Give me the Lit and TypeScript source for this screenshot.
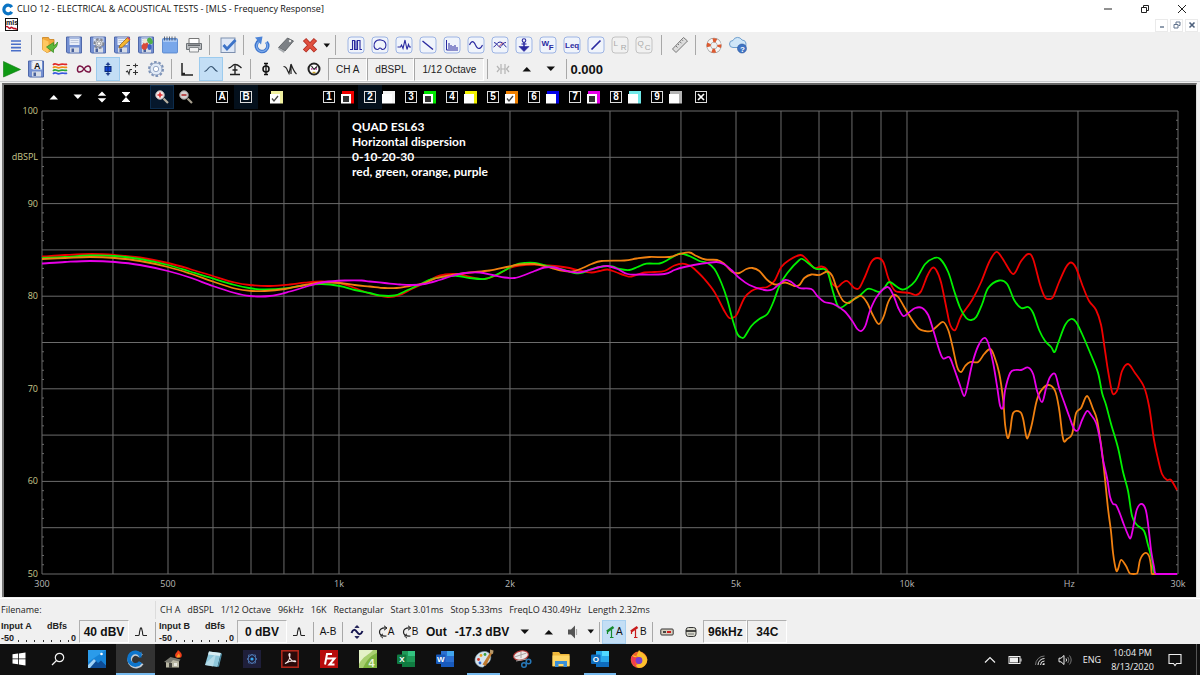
import { LitElement, html, svg, css } from "lit";
import { customElement, property } from "lit/decorators.js";
import { classMap } from "lit/directives/class-map.js";

type Pt = [number, number];

/* ---------- plot geometry (viewBox units) ---------- */
const PX = 42;
const PY = 111;
const PW = 1137;
const PH = 463;

const toPoints = (s: string): Pt[] =>
  s.trim().split(/\s+/).map((p) => p.split(",").map(Number) as Pt);

/* Catmull-Rom spline through the sampled points */
const spline = (pts: Pt[]): string => {
  let d = `M${pts[0][0]},${pts[0][1]}`;
  for (let i = 0; i < pts.length - 1; i++) {
    const a = pts[Math.max(0, i - 1)];
    const b = pts[i];
    const c = pts[i + 1];
    const e = pts[Math.min(pts.length - 1, i + 2)];
    const limY = (v: number) => Math.min(v, PY + PH).toFixed(1);
    const limX = (v: number) => Math.max(b[0], Math.min(v, c[0])).toFixed(1);
    d += `C${limX(b[0] + (c[0] - a[0]) / 6)},${limY(b[1] + (c[1] - a[1]) / 6)} ${limX(c[0] - (e[0] - b[0]) / 6)},${limY(c[1] - (e[1] - b[1]) / 6)} ${c[0]},${c[1]}`;
  }
  return d;
};

const CURVES: { color: string; data: string }[] = [
  {
    color: "#f00000",
    data: `42,256.5 65,255 92,254 115,255 140,257.5 168,263 190,269 213,276 235,282.5 250,285 270,286 290,284.5 305,282.7 322,281.5 340,283 355,288 370,293.5 388,297 400,295 412,289 425,283 437,276.5 445,274.5 455,274 463,275 475,278 485,279 495,276 510,268 520,265.5 535,264.5 548,265.5 560,266.5 570,268 580,270.5 592,272.5 600,271 608,269.5 616,272 627,276 632,276.5 645,272.5 655,272 665,271 675,265.5 683,263.7 690,265.5 695,269 705,279 715,292 725,311 730,318 735,317 738,313.5 745,298 752,291 760,288 768,287 775,281 782,267 790,260 801,255 807,259 815,268 822,266.5 828,270 832,282 838,287 843,283 848,281 855,288 860,288 866,276 872,262 878,258 884,262 889,278 895,290 900,292 910,293 917,295 922,291 928,276 933,268 937,270 942,283 948,312 951,325 956,330 962,316 973,300 982,282 990,262 997,252 1003,258 1012,272.5 1016,272.5 1022,261 1029,254 1034,259 1041,285 1046,297.5 1050,299 1054,297 1060,282 1067,267 1072,262.5 1077,268 1084,287 1090,301 1097,310 1102,325 1106,351 1109,371 1113,392 1116,393.5 1119,388 1123,371 1129,364 1136,373 1145,387 1150,406 1155,440 1159,459 1163,474 1168,480 1172,480 1178,490`,
  },
  {
    color: "#00f000",
    data: `42,258 65,257 90,255.5 115,256 140,259 168,265 190,271.5 213,278.5 235,285 252,288.5 265,289.5 285,288.5 303,285.5 322,284 340,286 355,290 370,293 380,295.5 395,295.5 408,290 420,284.5 432,279 447,276.5 458,276 470,278 485,279 495,275.5 505,270.5 515,265 525,263 535,263 550,266.5 565,270 575,273 582,273 592,269 603,266.5 613,266.5 620,269 630,270 638,267 647,263.7 660,263.5 668,260 675,256 681,253.5 690,256 700,261 708,263 715,269 722,283 728,300 733,319 738,334 742,337.5 745,337 752,326 760,319 768,314 774,302 780,286 788,273 800,260 804,259.5 810,264 817,269 825,269 829,274 833,289 838,305 842,307.5 850,302 860,296 868,289 873,289.5 880,292 885,288 890,282 898,287 903,289.5 908,288 916,281 926,264 935,258 941,259 949,272 955,291 961,308 967,318 972,320 977,317 983,304 989,288 1000,280.5 1008,284 1015,300 1022,308 1029,307 1034,313 1040,330 1046,341 1052,347 1055.5,352 1059,343 1066,325 1072,319 1077,322 1083,334 1092,355 1099,373 1103,393 1107,405 1112,424 1119,448 1124,472 1129,491 1133,516 1138,525 1145,531 1149,545 1153,560 1156,574 1178,574`,
  },
  {
    color: "#f08010",
    data: `42,259 65,258 90,257 115,258 140,261 168,267 190,273.5 213,281.5 235,288.5 252,291 265,291 285,289 305,285 322,282.5 340,283 355,285 370,286.5 385,288 397,288 410,286 425,283 437,278 452,275 470,272.5 490,270.5 507,267 520,264.5 535,264 548,267 562,270.5 573,271.5 583,268 592,264 602,261 625,260.5 637,258.5 650,257 670,257 680,254 690,252.5 697,256 706,259.5 718,260 725,264 733,272 740,273 747,269 753,268 760,271 768,280 776,284.5 786,282.5 795,286 800,285 805,278 812,274.5 820,275 828,271.5 833,276 838,290 844,301 850,303 855,299 862,296 868,303 873,314 878,323 881,323 885,315 889,302 894,295 899,297 905,307 913,320 920,329 926,331 932,331 937,327 944,322 949,330 953,345 958,367 962,372 966,366 971,362 979,362 985,354 991,349 995,356 1000,373 1004,400 1006,425 1008.5,438 1011,431 1014,413 1021,412 1024,419 1027,436 1029,437 1033,423 1037,403 1041,392 1049,385 1056,391 1060,409 1063,433 1065,441.5 1068,439 1073,434 1077,413 1082,408 1088,396 1094,409 1098,420 1102,445 1105,470 1109,509 1112,532 1114,553 1117,570 1119,569 1122,560 1127,566 1131,573.5 1138,573.5 1141,560 1146,553 1150,556 1152,566 1153,574 1178,574`,
  },
  {
    color: "#e800e8",
    data: `42,263.5 65,262 90,261 115,262 140,265 168,271 190,277.5 213,286 235,293 250,296 270,296 290,291.5 310,285.5 325,282 345,280.5 362,280.5 370,281.5 385,283 400,284.5 412,285 425,284 440,280 452,276 465,273 480,272.5 493,275 505,277.5 515,278 525,275 535,271 545,267.5 555,267.5 565,270.5 578,272.5 590,270 600,267 608,266 618,269 628,274 640,274.5 665,274 675,270 685,267 700,264 717,262 725,264.5 732,270 740,278 750,285 765,290 773,289.5 780,284 786,280 792,282 800,288 812,289 818,296 825,302 834,304 845,311 853,321 858,329 862,331 866,326 871,310 878,296 888,287 894,295 899,308 904,316 909,313 916,308 923,308 929,315 934,330 940,350 944,358.5 950,357 954,366 961,386 965,396 968,387 973,364 979,346 985,338 989,343 994,363 998,387 1001,406 1004,407 1006,390 1011,373 1016,370 1022,370 1029,367.5 1034,374 1038,391 1043,402 1047,388 1051,377 1056,374 1060,388 1065,402 1070,416 1075,429 1079,430 1083,420 1088,411 1092,415 1097,423 1101,440 1104,460 1108,478 1111,497 1114,504 1117,505 1121,514 1125,525 1130,537 1132,537 1135,523 1138,509 1143,504 1147,511 1150,532 1152,550 1155,567 1157,574 1178,574`,
  },
];

const FREQS = [300, 400, 500, 600, 700, 800, 900, 1000, 2000, 3000, 4000, 5000, 6000, 7000, 8000, 9000, 10000, 20000, 30000];
const frac = (f: number) => Math.log10(f / 300) / 2;
const X_LABELS: [number, string][] = [
  [300, "300"], [500, "500"], [1000, "1k"], [2000, "2k"], [5000, "5k"], [10000, "10k"], [19300, "Hz"], [30000, "30k"],
];
const Y_LABELS = ["100", "dBSPL", "90", "", "80", "", "70", "", "60", "", "50"];

/* ---------- icons ---------- */
const icon = (w: number, h: number, body: unknown) =>
  html`<svg width=${w} height=${h} viewBox="0 0 ${w} ${h}" fill="none" aria-hidden="true">${body}</svg>`;

const floppy = svg`
  <path d="M1.500 1h15v16h-14l-1-1z" fill="#7490d2" stroke="#4f68aa"/>
  <path d="M4.500 1.500h10V9h-10z" fill="#e9eef8"/><path d="M4.500 1.500h10v1.500h-10z" fill="#a9bae0"/>
  <path d="M5.500 4.500h8M5.500 6.500h8" stroke="#b4bfd6" stroke-width=".8"/>
  <path d="M5 11.500h9v5H5z" fill="#d7dce6"/><path d="M6.500 12.500h2.500v3.500H6.500z" fill="#48619c"/>`;

const mode = (body: unknown, off = false) => icon(18, 18, svg`
  <rect x="1" y="1" width="16" height="16" rx="3" fill=${off ? "#f1f1f1" : "#f0f4fb"} stroke=${off ? "#c2c2c2" : "#9db4e4"}/>
  <g stroke=${off ? "#b4b4b4" : "#2a2aa0"} stroke-width="1.100">${body}</g>`);

const modeText = (a: string, b: string, off = false) => mode(svg`
  <g stroke="none" fill=${off ? "#a8a8a8" : "#2a2aa0"} font-family="Liberation Sans, Arial, sans-serif" font-weight=${off ? "400" : "700"}>
    <text x="2.500" y="10" font-size="8">${a}</text><text x="9.800" y="14" font-size="8">${b}</text></g>`, off);

const gearRing = (cx: number, cy: number, r: number, fill: string, stroke: string) => svg`
  <circle cx=${cx} cy=${cy} r=${r} fill="none" stroke=${stroke} stroke-width="2" stroke-dasharray="2.600 1.800"/>
  <circle cx=${cx} cy=${cy} r=${r - 1} fill=${fill} stroke=${stroke} stroke-width=".8"/>
  <circle cx=${cx} cy=${cy} r=${r / 2.600} fill="#fff" stroke=${stroke} stroke-width=".8"/>`;

const I = {
  clio: icon(13, 13, svg`<path d="M10.800 4.200A4.300 4.300 0 1 0 10.800 8.800" stroke="#0b74c4" stroke-width="3.200"/>`),
  mls: icon(14, 14, svg`
    <rect x=".5" y=".5" width="12" height="12" fill="#fff" stroke="#111"/>
    <text x="1" y="6.500" font-size="7" font-weight="700" fill="#111" font-family="Liberation Sans, sans-serif">mls</text>
    <path d="M1 9c2-2 3 3 4.500 1s3 1.500 4 .5 1.500 2 2.500 0" stroke="#c01020" stroke-width="1.500"/>`),
  menu: icon(18, 18, svg`<path d="M4 5h10M4 8.300h10M4 11.600h10M4 14.700h10" stroke="#4a6fc8" stroke-width="1.600"/>`),
  open: icon(18, 18, svg`
    <path d="M1.500 1.500h6l1 2h4.500v10l-7 3-4.500-3z" fill="#f2a93a" stroke="#c9801c" stroke-width=".8"/>
    <path d="M1.500 3l6 2.500v11.500l-6-3z" fill="#ffc860"/>
    <path d="M16.500 6c0 4-1.500 6-4 7v3.500L5.500 11l7-4.500v3c2-.5 3-1.500 4-3.500z" fill="#5cb83c" stroke="#2f8a1e" stroke-width=".7"/>`),
  save: icon(18, 18, floppy),
  saveGear: icon(18, 18, svg`${floppy}${gearRing(10, 7.5, 4.5, "#e4e4e4", "#808590")}`),
  saveEdit: icon(18, 18, svg`${floppy}<path d="M6 12l1-3 7.500-7.500 2.500 2.300L9.300 11.300z" fill="#f6b62e" stroke="#9a6412" stroke-width=".8"/><path d="M14 2l1-1 2.500 2.300-1 1z" fill="#d8485a"/>`),
  saveColor: icon(18, 18, svg`${floppy}<ellipse cx="8" cy="10" rx="3" ry="4" fill="#d94a3a" transform="rotate(30 8 10)"/><ellipse cx="13" cy="5" rx="2.500" ry="3.500" fill="#4fae4a" transform="rotate(-30 13 5)"/><ellipse cx="8" cy="5" rx="2" ry="2.500" fill="#ece6d0"/><ellipse cx="12.500" cy="11" rx="2" ry="3" fill="#3e62c4"/>`),
  notepad: icon(18, 18, svg`<rect x="1.500" y="2.500" width="15" height="14.500" rx="1" fill="#79a7ea" stroke="#4d7dca" stroke-width=".8"/><path d="M2 4h14v2H2z" fill="#a9c8f4"/><path d="M3.500 .5v4M6 .5v4M8.500 .5v4M11 .5v4M14 .5v4" stroke="#4c5768" stroke-width=".9"/>`),
  print: icon(18, 18, svg`<path d="M4 2.500h10v5H4z" fill="#fff" stroke="#777"/><path d="M1.500 7.500h15v6h-15z" fill="#b9bcbf" stroke="#6d7276"/><path d="M3 8.500h12v1.500H3z" fill="#63676b"/><path d="M4.500 11.500h9v4.500h-9z" fill="#f4f4f4" stroke="#85898c"/>`),
  check: icon(18, 18, svg`<rect x="2" y="2" width="14" height="14.500" fill="#dfe8f6" stroke="#7d8fae"/><path d="M4.500 9l3.500 4 8.500-9" stroke="#3c73c8" stroke-width="2.800"/>`),
  undo: icon(18, 18, svg`<path d="M6 4.800A5.800 5.800 0 1 0 13.500 6" stroke="#3c74cc" stroke-width="3.400"/><path d="M6.500 5.200A5.500 5.500 0 1 0 13 6.200" stroke="#7aa8ea" stroke-width="1.400"/><path d="M2 1.500l7.500-1-1.500 8z" fill="#4c84d8"/>`),
  eraser: icon(18, 18, svg`<path d="M1.500 11.500L10.500 2l6 3-8.500 10z" fill="#7c8085" stroke="#54585c" stroke-width=".8"/><path d="M1.500 11.500l6 3.500-.5 2-5.500-3.500z" fill="#a8acb0"/><circle cx="13" cy="5" r="1.200" fill="#e8e8e8"/>`),
  cross: icon(18, 18, svg`<path d="M3.500 3.500l11 11.500M14.500 3.500L3.500 15" stroke="#b02c22" stroke-width="4.600"/><path d="M4 4l10 10.500M14 4L4 14.500" stroke="#e0503f" stroke-width="3"/>`),
  drop: icon(8, 5, svg`<path d="M.5 .5h6.500L3.800 4.500z" fill="#111"/>`),
  mls1: mode(svg`<path d="M3 13.500h2.500v-9h2v9h1.500v-9M9 4.500v9h1.500v-9h2.500v9h2"/>`),
  polar: mode(svg`<path d="M6.500 13.500C2.500 13.500 2 8 4.500 5.500S13 3.500 14.500 7s-.5 6.500-3 6.500c-1 0-1-1.500-2.500-1.500s-1 1.500-2.500 1.500z"/>`),
  pulse: mode(svg`<path d="M2.500 11h3l1-2 1.500 3.500 2-8.500 2 9.500 1.500-5 1 2.500h1.500"/>`),
  decay: mode(svg`<path d="M3.500 5l10.500 8.500" stroke-width="1.400"/>`),
  fft: mode(svg`<path d="M3.500 4v10h11.500M6 13V7M8 13V9M10 13v-3M12 13v-4M14 13v-2" stroke-width="1"/>`),
  sine: mode(svg`<path d="M2.500 9c2-4.500 4-4.500 6 0s4.500 5 7 0"/>`),
  waterfall: mode(svg`<path d="M2.500 11c3-1 3-5 6.500-5s4 4 6.500 5M3 6.500c3 0 4 5 7 5M15 6.500c-3 0-3 2-5 4" stroke-width="1"/><path d="M8 10.500l4-4" stroke="#b03050" stroke-width="1"/>`),
  anchor: mode(svg`<circle cx="9" cy="4.500" r="1.800"/><path d="M9 6v5" stroke-width="1.500"/><path d="M4 10.500h10l-2 2-3 3-3-3z" fill="#2a2aa0" stroke-width=".6"/><path d="M6.500 8h5"/>`),
  wf: modeText("W", "F"),
  leq: mode(svg`<text x="2" y="12" font-size="8" stroke="none" fill="#2a2aa0" font-weight="700" font-family="Liberation Sans, Arial, sans-serif">Leq</text>`),
  linear: mode(svg`<path d="M4.500 13.500L13.500 4.500" stroke-width="1.700"/>`),
  lr: modeText("L", "R", true),
  qc: modeText("Q", "C", true),
  ruler: icon(18, 18, svg`<path d="M1.500 13L12.500 1.500l4 3.500L5 16.500z" fill="#dcdcdc" stroke="#777"/><path d="M5 10l1.500 1.500M7 8l1 1M9 5.800l1.500 1.500M11 3.800l1 1" stroke="#777"/>`),
  buoy: icon(18, 18, svg`<circle cx="9" cy="9.500" r="5.300" stroke="#9a9a9a" stroke-width="4.800"/><circle cx="9" cy="9.500" r="5.300" stroke="#f6f6f6" stroke-width="3.600"/><circle cx="9" cy="9.500" r="5.300" stroke="#dc5a30" stroke-width="4" stroke-dasharray="3.600 4.725" stroke-dashoffset="1.800"/>`),
  cloud: icon(20, 18, svg`<path d="M5 11.500a3.500 3.500 0 0 1 0-7A5 5 0 0 1 14 4a4 4 0 0 1 2 7.500z" fill="#cfe6f8" stroke="#6f9fce"/><circle cx="14" cy="12.500" r="4.500" fill="#3f74c4" stroke="#2a559c" stroke-width=".6"/><text x="12" y="15.500" font-size="8" font-weight="700" fill="#fff" font-family="Liberation Sans, sans-serif">?</text>`),
  play: icon(20, 18, svg`<path d="M1.500 1.500v15.500L18.500 9.500z" fill="#0f9a14" stroke="#0a7a0e" stroke-width=".6"/>`),
  saveA: icon(18, 18, svg`${floppy}<rect x="5.500" y="1" width="9.500" height="8.500" fill="#eef0f4"/><text x="7" y="8.500" font-size="9" font-weight="700" fill="#111" font-family="Liberation Sans, sans-serif">A</text>`),
  waves: icon(16, 16, svg`<g stroke-width="1.700"><path d="M1 4c2.500-3 4 1 7-.5S13 4.500 15 3" stroke="#e02828"/><path d="M1 7c2.500-3 4 1 7-.5S13 7.500 15 6" stroke="#f09018"/><path d="M1 10c2.500-3 4 1 7-.5S13 10.500 15 9" stroke="#28a838"/><path d="M1 13c2.500-3 4 1 7-.5S13 13.500 15 12" stroke="#3858e0"/></g>`),
  inf: icon(16, 12, svg`<path d="M8 6C6 2.500 2 1.500 1.500 6S6 9.500 8 6s6-4.500 6.500 0S10 9.500 8 6z" stroke="#7a1444" stroke-width="1.500"/>`),
  level: icon(12, 16, svg`<path d="M6 1L8.500 4h-5zM6 15l2.500-3h-5z" fill="#2c4a98"/><rect x="3" y="5.500" width="6" height="5" fill="#1646d8" stroke="#0a2a78"/><path d="M6 3v10" stroke="#0a2a78"/>`),
  signs: icon(14, 14, svg`<path d="M1.500 3.500h3.500M8 3.500h5M10.500 1.500v4M1 10l1.500-1L4 12l1-4.500h2M8 10.500h5M10.500 8v5" stroke="#333" stroke-width="1.100"/>`),
  gear: icon(18, 18, gearRing(9, 9, 7, "#e2ebf7", "#7d93b8")),
  stepA: icon(16, 16, svg`<path d="M3 2v12h11M3 12.500h3" stroke="#222" stroke-width="1.500"/>`),
  curve: icon(16, 10, svg`<path d="M1.500 7.500C5 7 5 2.500 8 2.500s3 4 6.500 5" stroke="#33506e" stroke-width="1.200"/>`),
  stepB: icon(16, 16, svg`<path d="M1.500 7C5 7 5 3.500 8 3.500s3.500 1 6.500 3.500M8 4.500v8.500M3 13.500h10M5.500 9h5" stroke="#222" stroke-width="1.400"/>`),
  phi: icon(12, 16, svg`<path d="M6 2.500v11M4 2.500h4M4 13.500h4" stroke="#111" stroke-width="1.300"/><ellipse cx="6" cy="8" rx="3" ry="3" stroke="#111" stroke-width="1.500"/>`),
  spike: icon(16, 16, svg`<path d="M1.500 5.500c2 0 3 1 4 4l1.500 3L9 3v10M9 3c1.500 4 3 8 5.500 10" stroke="#222" stroke-width="1.200"/>`),
  clock: icon(16, 16, svg`<circle cx="8" cy="8" r="5.500" fill="#fff" stroke="#222" stroke-width="2"/><path d="M8 8.500L5.500 5M8 8.500l3-3" stroke="#222" stroke-width="1.200"/><path d="M5 8h1.500M9.500 8H11" stroke="#b83a9c" stroke-width="1.300"/><path d="M6.500 11.500h3" stroke="#c8a020" stroke-width="1.400"/>`),
  marks: icon(14, 14, svg`<path d="M5 2v10M9 2v10M1 4l2.500 3L1 10M13 4l-2.500 3 2.500 3M5 7h4" stroke="#b4b4b4" stroke-width="1.200"/>`),
  up: icon(10, 6, svg`<path d="M.5 5.500h8.500L4.800 1z" fill="currentColor"/>`),
  down: icon(10, 6, svg`<path d="M.5 .5h8.500L4.800 5z" fill="currentColor"/>`),
  expand: icon(10, 12, svg`<path d="M.8 4.800h8.400L5 .5zM.8 7.200h8.400L5 11.500z" fill="#fff"/>`),
  collapse: icon(10, 12, svg`<path d="M1 1.500h8L5 6zM1 10.500h8L5 6z" fill="#fff"/><path d="M1 1.500h8M1 10.500h8" stroke="#fff"/>`),
  zoomIn: icon(16, 16, svg`<path d="M9.500 9.500l4.500 4.500" stroke="#b8b0a0" stroke-width="2.200"/><circle cx="6" cy="6" r="4.300" fill="#f6eaea" stroke="#a8a8a8"/><path d="M6 3.500v5M3.500 6h5" stroke="#e03030" stroke-width="1.600"/>`),
  zoomOut: icon(16, 16, svg`<path d="M9.500 9.500l4.500 4.500" stroke="#a8a090" stroke-width="2.200"/><circle cx="6" cy="6" r="4.300" fill="#d4d0d0" stroke="#8a8a8a"/><path d="M3.500 6h5" stroke="#b03030" stroke-width="1.600"/>`),
  rise: icon(14, 12, svg`<path d="M1 9.500h3.500c1 0 1-1.500 1-3.500L6.500 2h1l1 4c0 2 0 3.500 1 3.500H13" stroke="#222" stroke-width="1.100"/>`),
  swap: icon(14, 16, svg`<path d="M1.500 9c1.500-4 3.500-4 5.500-1s4 3 5.500-1" stroke="#15154e" stroke-width="2"/><path d="M7 1.500l2 2H5zM7 14.500l2-2H5z" fill="#15154e" stroke="#15154e" stroke-width=".8"/>`),
  loop: icon(10, 14, svg`<path d="M8.500 3C3 2.500 1.500 5 1.500 7s1.500 4.500 7 4" stroke="#222" stroke-width="1.200"/><path d="M6 .8L9 3 6 5.200M5 8.800L2.500 11 5 13.200" stroke="#222"/>`),
  speaker: icon(12, 14, svg`<path d="M1 4.500h3l4-4v13l-4-4H1z" fill="#555"/><path d="M9.500 4v6" stroke="#aaa" stroke-width="1.200"/>`),
  mic: (c: string) => icon(10, 14, svg`<path d="M1 6.500L7.500 2" stroke=${c} stroke-width="2.600"/><path d="M1.500 6v3M5.500 4.500v8M4 12.500h3.500" stroke=${c} stroke-width="1.200"/>`),
  device: icon(14, 10, svg`<rect x=".8" y="2" width="12.400" height="6" rx="1" fill="#d8d0c0" stroke="#333"/><path d="M3 5h3" stroke="#222" stroke-width="1.600"/><path d="M7 5h4" stroke="#d02020" stroke-width="2"/>`),
  drum: icon(12, 12, svg`<rect x="1" y="1.500" width="10" height="9" rx="2.500" fill="#d8d8cc" stroke="#333"/><path d="M1 5h10" stroke="#222" stroke-width="1.600"/><path d="M3 8h6" stroke="#777"/>`),
  min: icon(10, 10, svg`<path d="M1 5h8" stroke="#222"/>`),
  restore: icon(10, 10, svg`<path d="M1.500 3.500h5v5h-5zM3.500 3V1.500h5v5H7" stroke="#222"/>`),
  close: icon(10, 10, svg`<path d="M1 1l8 8M9 1L1 9" stroke="#222"/>`),
  min2: icon(8, 8, svg`<path d="M2 6h4" stroke="#61738c" stroke-width="1.400"/>`),
  restore2: icon(8, 8, svg`<path d="M1 3.500h4v3.500H1zM3 3V1h4v3.500H5.500" stroke="#61738c"/>`),
  close2: icon(8, 8, svg`<path d="M1.500 1.500l5 5M6.500 1.500l-5 5" stroke="#4d607c" stroke-width="1.600"/>`),
};

const T = {
  windows: icon(14, 14, svg`<path d="M.5 2.300L6 1.500v5H.5zM6.800 1.400L13.500.5v6H6.800zM.5 7.300H6v5l-5.500-.8zM6.800 7.300h6.700v6.200l-6.700-.9z" fill="#fff"/>`),
  search: icon(14, 14, svg`<circle cx="8.500" cy="5.500" r="4.200" stroke="#f2f2f2" stroke-width="1.200"/><path d="M5.500 8.500L1 13" stroke="#f2f2f2" stroke-width="1.300"/>`),
  photos: icon(18, 18, svg`<path d="M0 0h18v18H0z" fill="#1683d8"/><path d="M0 0h18L0 12z" fill="#2b9bea"/><path d="M0 18v-3l6-6 4 4 3-2.500 5 5V18z" fill="#0d4c96"/><path d="M0 15l6-6 2 2-6 7H0z" fill="#9fd2f6"/><circle cx="13.500" cy="4" r="1.300" fill="#fff"/>`),
  clio: icon(20, 20, svg`<path d="M16 7A6.300 6.300 0 1 0 16.500 14" stroke="#c4ccd4" stroke-width="4.600"/><path d="M15.500 6.200A6.300 6.300 0 1 0 15.500 13.200" stroke="#0d75cc" stroke-width="3.800"/><path d="M16.500 2v6.500h-3z" fill="#0d75cc"/>`),
  house: icon(20, 20, svg`<path d="M2 13l6-4 7 1.500v8H2z" fill="#b9b7a4"/><path d="M0 13l6.500-5 10 2.500-1.500 2-6-1.500-2.500 3z" fill="#7b7b72"/><path d="M5 14h3v5H5z" fill="#44443e"/><path d="M10 14h3v3h-3z" fill="#e8e8e0"/><path d="M14 1c3 2.500 5 4.500 3 7.500h-5C9.500 5 13 4 14 1z" fill="#f2401a"/><path d="M14.500 4.500c1.500 1.500 2 3 1 4h-2.500c-1-1.500 1-2 1.500-4z" fill="#fc9a28"/>`),
  note: icon(18, 18, svg`<path d="M5 1.500l12 1.500-3.500 14L1 15z" fill="#8fc8dc"/><path d="M5 1.500l12 1.500-.7 3L4 4.500z" fill="#d8eef4"/><path d="M13.500 17L17 3l1 1-3 12.500z" fill="#4b8ca4"/><path d="M3 12l9-8-3 12.500L1 15z" fill="#c4e4ee" opacity=".7"/>`),
  atom: icon(18, 18, svg`<path d="M0 0h18v18H0z" fill="#1f1f3a"/><path d="M9 4l5 5-5 5-5-5zM5.500 5h7v8h-7z" stroke="#4a70a8" stroke-width=".9"/><circle cx="9" cy="9" r="1.600" fill="#36a8f0"/>`),
  acrobat: icon(18, 18, svg`<rect x=".8" y=".8" width="16.400" height="16.400" fill="#2b0a0a" stroke="#b8281c" stroke-width="1.500"/><path d="M4 13.500c3-1 5-5 5-9 0-1.500-1.500-1-1 .8.800 3.500 3 6.200 6 6.500 1 0 1-1-.5-1-3.500 0-6.500.7-9.500 2.700z" stroke="#f4e8e8" stroke-width="1.100"/>`),
  filezilla: icon(18, 18, svg`<path d="M0 0h18v18H0z" fill="#b80c0c"/><path d="M5 14.500L7 4h5M6 8.500h4.500M9.500 8.500h5l-5 6h5" stroke="#fff" stroke-width="2"/>`),
  green: icon(18, 18, svg`<path d="M0 0h18v18H0z" fill="#a8d070"/><path d="M0 0h14C10 5 4 6 0 14z" fill="#e4f2c8"/><path d="M4 18C7 11 12 5 18 3v15z" fill="#7cb440"/><text x="9.500" y="16.500" font-size="11" font-weight="700" fill="#e8f4d8" font-family="Liberation Sans, sans-serif">4</text>`),
  office: (letter: string, a: string, b: string, c: string) => icon(18, 18, svg`<path d="M5 1h13v16H5z" fill=${a}/><path d="M11 1h7v5h-7z" fill=${b}/><path d="M5 12h13v5H5z" fill=${c}/><rect x="0" y="4.500" width="9.500" height="9.500" rx="1" fill=${c}/><text x="4.800" y="12" text-anchor="middle" font-size="8" font-weight="700" fill="#fff" font-family="Liberation Sans, sans-serif">${letter}</text>`),
  paint: icon(20, 20, svg`<path d="M1 11C1 6 6 2 11 2.500s7 5 5 9-3 2-4.500 4-2 3-4.500 2.500S1 15 1 11z" fill="#d4e4ee" stroke="#7e9cb0" stroke-width=".6"/><circle cx="4.500" cy="10.500" r="1.400" fill="#d83a2c"/><circle cx="7" cy="6.500" r="1.400" fill="#e8a020"/><circle cx="11" cy="5.500" r="1.400" fill="#38a040"/><circle cx="6" cy="14" r="1.400" fill="#2c62d0"/><path d="M8.500 15.500L17 2l1.800 1-7 14z" fill="#c07a30"/><path d="M16 .5l3.500 1L19 5l-3-1z" fill="#b89868"/>`),
  snip: icon(20, 20, svg`<ellipse cx="9" cy="6.500" rx="7.500" ry="4.500" fill="#ece8e8" stroke="#b83a3a" stroke-width="1.100" transform="rotate(-12 9 6.500)"/><path d="M2.500 8l12-4M9 3v6M4 12l11-2" stroke="#a8a0a0"/><circle cx="12" cy="16" r="2.300" stroke="#2878b8" stroke-width="1.500"/><circle cx="16.500" cy="12.500" r="2.300" stroke="#2878b8" stroke-width="1.500"/>`),
  folder: icon(18, 18, svg`<path d="M.5 2h6.500l1.500 2h9v12.500H.5z" fill="#f0b83a"/><path d="M.5 5.500h17V16H.5z" fill="#ffd766"/><path d="M3 17v-6h12v6h-3.500v-3h-5v3z" fill="#3a90d8"/>`),
  firefox: icon(20, 20, svg`<circle cx="10" cy="10.800" r="8.300" fill="#f0642c"/><path d="M3 6c1 2 2 2.500 4 2l3-7c2 3 7 4 8.300 9.500C18 16 14 19 10 19c-4-1-3.500-4 0-4 3-.5 4-4 1.500-6.500z" fill="#fcc02c"/><path d="M2.500 7C1.500 12 4 17 8 18.500c-3-3-2-7 1-9z" fill="#f23c52"/><circle cx="10" cy="11.500" r="3.400" fill="#7a3cd0"/>`),
  chevron: icon(12, 8, svg`<path d="M1 6.500l5-5 5 5" stroke="#eee" stroke-width="1.200"/>`),
  battery: icon(14, 10, svg`<rect x="1" y="1.500" width="11" height="7" stroke="#eee"/><path d="M2 2.500h8v5H2z" fill="#eee"/><path d="M13 3.500v3" stroke="#eee"/>`),
  wifi: icon(12, 12, svg`<path d="M1.500 11A9 9 0 0 1 10.500 2" stroke="#777"/><path d="M4 11a6.500 6.500 0 0 1 6.500-6.500M6.500 11a4 4 0 0 1 4-4" stroke="#e6e6e6"/><path d="M10.500 9v2h-2.200a2.200 2.200 0 0 1 2.200-2z" fill="#eee"/>`),
  volume: icon(14, 12, svg`<path d="M1 4.200h2l3-2.700v9L3 7.800H1z" stroke="#eee"/><path d="M8 4.500a2.500 2.500 0 0 1 0 3" stroke="#eee"/><path d="M9.800 3a5 5 0 0 1 0 6M11.500 1.500a7.500 7.500 0 0 1 0 9" stroke="#777"/>`),
  notify: icon(14, 14, svg`<path d="M1 1.500h12v9H8.500l-1.500 2-1.500-2H1z" stroke="#eee" stroke-width="1.100"/>`),
};

const base = css`
  * { box-sizing: border-box; }
  button {
    display: flex; align-items: center; justify-content: center; flex: none;
    padding: 0; border: 0; background: none; color: inherit; font: inherit;
  }
  svg { display: block; flex: none; }
`;

/* ---------- top tool bars ---------- */
@customElement("clio-toolbars")
export class ClioToolbars extends LitElement {
  static styles = [base, css`
    :host { display: block; padding-top: 1px; background: #f0f0f0; border-bottom: 1px solid #c8cacc; color: #111; }
    .row { display: flex; align-items: center; height: 24px; }
    .first { padding-left: 4px; }
    .btn { width: 24px; height: 24px; }
    .active { background: #c3def5; border: 1px solid #9ccbee; }
    .sep { flex: none; width: 1px; height: 20px; margin: 0 6px 0 3px; background: #a8a8a8; }
    .tight { margin: 0 3px; }
    .modes { display: flex; padding: 0 2px; }
    .arrow { width: 10px; height: 24px; }
    .field {
      height: 23px; padding: 0 7px; border: 1px solid; border-color: #a6a6a6 #fff #fff #a6a6a6;
      font: 10px "Liberation Sans", Arial, sans-serif; color: #222; white-space: nowrap;
    }
    .fields { display: flex; margin-left: 2px; }
    .value { font: bold 13px "Liberation Sans", Arial, sans-serif; }
  `];
  private b(i: unknown, label: string, on = false) {
    return html`<button class=${classMap({ btn: true, active: on })} aria-label=${label}>${i}</button>`;
  }
  render() {
    const sep = html`<span class="sep"></span>`;
    const tight = html`<span class="sep tight"></span>`;
    return html`
      <div class="row first" role="toolbar" aria-label="Main">
        ${this.b(I.menu, "Menu")}${sep}
        ${this.b(I.open, "Open")}${this.b(I.save, "Save")}${this.b(I.saveGear, "Autosave settings")}${this.b(I.saveEdit, "Save notes")}
        ${this.b(I.saveColor, "Export graphics")}${this.b(I.notepad, "Notes")}${this.b(I.print, "Print")}${sep}
        ${this.b(I.check, "Options")}${sep}
        ${this.b(I.undo, "Undo")}${this.b(I.eraser, "Erase")}${this.b(I.cross, "Delete")}
        <button class="arrow" aria-label="Delete options">${I.drop}</button>${sep}
        <div class="modes">
          ${this.b(I.mls1, "MLS")}${this.b(I.polar, "Polar")}${this.b(I.pulse, "Impulse")}${this.b(I.decay, "Decay")}
          ${this.b(I.fft, "FFT")}${this.b(I.sine, "Sinusoidal")}${this.b(I.waterfall, "Waterfall")}${this.b(I.anchor, "Multimeter")}
          ${this.b(I.wf, "Wow and flutter")}${this.b(I.leq, "Leq")}${this.b(I.linear, "Linearity")}${this.b(I.lr, "Loudness rating")}${this.b(I.qc, "Quality control")}
        </div>${sep}
        ${this.b(I.ruler, "Ruler")}${sep}${this.b(I.buoy, "Help")}${this.b(I.cloud, "Online help")}
      </div>
      <div class="row" role="toolbar" aria-label="Measurement">
        ${this.b(I.play, "Go")}${this.b(I.saveA, "Autosave")}${this.b(I.waves, "Overlays")}${this.b(I.inf, "Loop")}
        ${this.b(I.level, "Autorange", true)}${this.b(I.signs, "Average")}${this.b(I.gear, "Settings")}${tight}
        ${this.b(I.stepA, "Time domain")}${this.b(I.curve, "Frequency response", true)}${this.b(I.stepB, "Post process")}${tight}
        ${this.b(I.phi, "Phase")}${this.b(I.spike, "Group delay")}${this.b(I.clock, "Wrapped")}
        <div class="fields">
          <button class="field">CH A</button><button class="field">dBSPL</button><button class="field">1/12 Octave</button>
        </div>${tight}
        ${this.b(I.marks, "Markers")}${this.b(I.up, "Increase")}${this.b(I.down, "Decrease")}${tight}
        <output class="value">0.000</output>
      </div>`;
  }
}

/* ---------- chart ---------- */
@customElement("clio-chart")
export class ClioChart extends LitElement {
  static styles = [base, css`
    :host {
      display: grid; grid-template: 26px minmax(0, 1fr) 23px / 38px minmax(0, 1fr) 18px;
      min-height: 0; background: #000; color: #fff;
    }
    .tools { grid-column: 2 / 4; display: flex; align-items: center; height: 24px; }
    .btn { width: 24px; height: 24px; }
    .on { background: #06182c; border: 1px solid #0c2c4c; }
    .dim { background: #04101c; }
    .gap { flex: none; width: 12px; }
    .gap6 { flex: none; width: 6px; }
    .gap30 { flex: none; width: 29px; }
    .slots { display: flex; margin-right: 3px; }
    .num {
      display: block; width: 12px; height: 12px; border: 1px solid #ddd;
      font: bold 10px/10px "Liberation Sans", Arial, sans-serif; text-align: center;
    }
    .swatch { width: 17px; height: 24px; justify-content: flex-start; }
    .ylabels {
      display: flex; flex-direction: column; justify-content: space-between;
      margin: -6px 4px -6px 0; text-align: right;
      font: 9px/12px "Open Sans", "Noto Sans", sans-serif; color: #c8c88c;
    }
    .ylabels span { height: 12px; }
    .plot { position: relative; min-height: 0; }
    .plot svg { width: 100%; height: 100%; overflow: visible; }
    .note {
      position: absolute; left: 310px; top: 8px; margin: 0; white-space: pre;
      font: bold 12px/15px Lato, "Open Sans", sans-serif; color: #fff;
    }
    .xlabels { grid-column: 2; width: 100%; height: 23px; overflow: visible; }
    .xlabels text { font: 9px "Open Sans", "Noto Sans", sans-serif; fill: #b8b8b8; text-anchor: middle; }
  `];
  private n(s: string, on = false) {
    return html`<button class=${classMap({ btn: true, dim: on })} aria-label="Curve ${s}"><span class="num">${s}</span></button>`;
  }
  private swatch(c: string, state: string) {
    return icon(13, 13, svg`
      <path d="M1 1.500h10.500V12.500" stroke=${c} stroke-width="3"/>
      <rect x="0" y="3" width="10" height="9.500" fill="#fff"/>
      ${state === "dot" ? svg`<rect x="2" y="5" width="6" height="6" fill="#333"/>` : ""}
      ${state === "check" ? svg`<path d="M2 7.500l2 2.500 4-5" stroke="#444" stroke-width="1.300"/>` : ""}`);
  }
  render() {
    const slots: [string, string][] = [
      ["#f00000", "dot"], ["#f4f4f4", ""], ["#00e800", "dot"], ["#f0f000", ""], ["#f08000", "check"],
      ["#0000e8", ""], ["#e800e8", "dot"], ["#70e8e8", ""], ["#b4b4b4", ""],
    ];
    const b = (i: unknown, l: string, on = false) =>
      html`<button class=${classMap({ btn: true, on })} aria-label=${l}>${i}</button>`;
    const xs = FREQS.map((f) => PX + frac(f) * PW);
    const minor = Array.from({ length: 51 }, (_, i) => PY + (i * PH) / 50);
    return html`
      <div class="tools" role="toolbar" aria-label="Chart">
        ${b(I.up, "Scroll up")}${b(I.down, "Scroll down")}${b(I.expand, "Expand")}${b(I.collapse, "Compress")}
        <span class="gap"></span>${b(I.zoomIn, "Zoom in", true)}${b(I.zoomOut, "Zoom out")}
        <span class="gap"></span>${this.n("A")}${this.n("B", true)}
        <span class="gap6"></span>${b(this.swatch("#f0f0a0", "check"), "Show main curve")}
        <span class="gap30"></span>
        <div class="slots">
          ${slots.map(([c, s], i) => html`${this.n(String(i + 1), i === 1)}<button class="swatch" aria-label="Show overlay ${i + 1}">${this.swatch(c, s)}</button>`)}
        </div>
        <button class="btn" aria-label="Remove overlays">${icon(12, 12, svg`<rect x=".5" y=".5" width="11" height="11" stroke="#ddd"/><path d="M3 3l6 6M9 3l-6 6" stroke="#fff" stroke-width="1.700"/>`)}</button>
      </div>
      <div class="ylabels">${Y_LABELS.map((l) => html`<span>${l}</span>`)}</div>
      <div class="plot">
        <svg viewBox="${PX} ${PY} ${PW} ${PH}" preserveAspectRatio="none" role="img" aria-label="Frequency response">
          <g stroke="#6c6c6c" stroke-width="1" shape-rendering="crispEdges">
            ${xs.map((x) => svg`<line x1=${x} x2=${x} y1=${PY} y2=${PY + PH} vector-effect="non-scaling-stroke"/>`)}
            ${minor.map((y, i) => i % 5 === 0
              ? svg`<line x1=${PX} x2=${PX + PW} y1=${y} y2=${y} vector-effect="non-scaling-stroke"/>`
              : svg`<path d="M${PX} ${y}h2M${PX + PW} ${y}h-2" vector-effect="non-scaling-stroke"/>`)}
          </g>
          ${CURVES.map((c) => svg`<path d=${spline(toPoints(c.data))} stroke=${c.color} stroke-width="1.800" fill="none" stroke-linejoin="round" vector-effect="non-scaling-stroke"/>`)}
        </svg>
        <p class="note">QUAD ESL63
Horizontal dispersion
0-10-20-30
red, green, orange, purple</p>
      </div>
      <svg class="xlabels">${X_LABELS.map(([f, l]) => svg`<text x="${frac(f) * 100}%" y="13">${l}</text>`)}</svg>`;
  }
}

/* ---------- input level meter ---------- */
@customElement("clio-meter")
export class ClioMeter extends LitElement {
  @property() name = "";
  static styles = [base, css`
    :host { display: block; width: 76px; flex: none; padding-left: 1px; font: bold 9px/12px "Liberation Sans", Arial, sans-serif; color: #222; }
    .line { display: flex; justify-content: space-between; }
    .head { padding-right: 9px; }
    .scale { align-items: center; }
  `];
  render() {
    return html`
      <div class="line head"><span>${this.name}</span><span>dBfs</span></div>
      <div class="line scale"><span>-50</span>
        ${icon(54, 12, svg`<path d="M2.500 8v2M10.500 8v2M18.500 8v2M27.500 8v2M35.500 8v2M44.500 8v2M52.500 8v2" stroke="#333"/>`)}
        <span>0</span></div>`;
  }
}

/* ---------- status area ---------- */
@customElement("clio-status")
export class ClioStatus extends LitElement {
  static styles = [base, css`
    :host { display: block; background: #f0f0f0; color: #111; border-top: 1px solid #fff; }
    .info { display: flex; align-items: center; height: 20px; padding-top: 2px; font: 9px/12px "Open Sans", "Noto Sans", sans-serif; color: #222; white-space: nowrap; }
    .file { width: 156px; line-height: 18px; padding-left: 1px; border-right: 1px solid #dcdcdc; }
    .params { display: flex; gap: 7px; padding-left: 4px; }
    .row { display: flex; align-items: center; height: 25px; font: 10px "Liberation Sans", Arial, sans-serif; }
    .btn { width: 24px; height: 24px; }
    .active { background: #c3def5; border: 1px solid #a8d0f0; }
    .sep { flex: none; width: 1px; height: 20px; margin: 0 2px; background: #a8a8a8; }
    .box {
      width: 50px; height: 23px; border: 1px solid; border-color: #b0b0b0 #fff #fff #b0b0b0;
      font: bold 12px "Liberation Sans", Arial, sans-serif; white-space: nowrap;
    }
    .gap { margin-left: 3px; }
    .rate { width: 44px; }
    .temp { width: 40px; }
    .strong { font: bold 12px "Liberation Sans", Arial, sans-serif; white-space: nowrap; padding: 0 4px; }
    .drop { width: 12px; height: 24px; }
  `];
  render() {
    const sep = html`<span class="sep"></span>`;
    const b = (i: unknown, l: string, on = false) =>
      html`<button class=${classMap({ btn: true, active: on })} aria-label=${l}>${i}</button>`;
    const params = ["CH A", "dBSPL", "1/12 Octave", "96kHz", "16K", "Rectangular", "Start 3.01ms", "Stop 5.33ms", "FreqLO 430.49Hz", "Length 2.32ms"];
    return html`
      <div class="info"><span class="file">Filename:</span>
        <div class="params">${params.map((p) => html`<span>${p}</span>`)}</div></div>
      <div class="row">
        <clio-meter name="Input A"></clio-meter>
        <button class="box gap">40 dBV</button>${b(I.rise, "Input A pulse")}${sep}
        <clio-meter name="Input B"></clio-meter>
        <button class="box gap">0 dBV</button>${b(I.rise, "Input B pulse")}${sep}
        <button class="btn">A-B</button>${sep}
        ${b(I.swap, "Generator")}${sep}
        <button class="btn">${I.loop}A</button><button class="btn">${I.loop}B</button>
        <span class="strong">Out</span><output class="strong">-17.3 dBV</output>
        ${b(I.down, "Output down")}${b(I.up, "Output up")}${b(I.speaker, "Output mute")}
        <button class="drop" aria-label="Generator menu">${I.drop}</button>${sep}
        <button class="btn active">${I.mic("#168a2c")}A</button><button class="btn">${I.mic("#c81c1c")}B</button>${sep}
        ${b(I.device, "Interface")}${b(I.drum, "Storage")}
        <button class="box rate">96kHz</button><button class="box temp">34C</button>
      </div>`;
  }
}

/* ---------- desktop task bar ---------- */
@customElement("desktop-taskbar")
export class DesktopTaskbar extends LitElement {
  static styles = [base, css`
    :host {
      display: flex; justify-content: space-between; height: 31px; background: #101010; color: #f0f0f0;
      font: 9px/14px "Open Sans", "Noto Sans", sans-serif;
    }
    .apps { display: flex; width: 658px; }
    .app { flex: 1 1 0; height: 31px; border-bottom: 2px solid transparent; }
    .current { background: #333; border-bottom-color: #76b9ed; }
    .open::after { content: ""; position: absolute; left: 3px; right: 3px; bottom: -2px; height: 2px; background: #76b9ed; }
    .open { position: relative; }
    .tray { display: flex; align-items: center; }
    .t { width: 25px; height: 31px; }
    .lang { width: 30px; }
    .time { width: 51px; height: 31px; flex-direction: column; white-space: nowrap; }
    .notify { width: 34px; height: 31px; }
    .edge { width: 4px; height: 31px; margin-left: 4px; border-left: 1px solid #555; }
  `];
  render() {
    const apps: [unknown, string, string][] = [
      [T.windows, "Start", ""], [T.search, "Search", ""], [T.photos, "Photos", ""], [T.clio, "CLIO", "current"],
      [T.house, "Fire", ""], [T.note, "Notepad", ""], [T.atom, "Lab", ""], [T.acrobat, "Acrobat", ""],
      [T.filezilla, "FileZilla", ""], [T.green, "Designer", ""],
      [T.office("X", "#1f9a58", "#33c481", "#107c41"), "Excel", ""],
      [T.office("W", "#2b6fd0", "#41a5ee", "#185abd"), "Word", ""],
      [T.paint, "Paint", "open"], [T.snip, "Snipping Tool", ""], [T.folder, "File Explorer", ""],
      [T.office("O", "#28a8ea", "#50d9ff", "#0f6cbd"), "Outlook", "open"], [T.firefox, "Firefox", ""],
    ];
    return html`
      <div class="apps">${apps.map(([i, l, s]) => html`<button class=${classMap({ app: true, current: s === "current", open: s === "open" })} aria-label=${l}>${i}</button>`)}</div>
      <div class="tray">
        <button class="t" aria-label="Hidden icons">${T.chevron}</button>
        <button class="t" aria-label="Battery">${T.battery}</button>
        <button class="t" aria-label="Network">${T.wifi}</button>
        <button class="t" aria-label="Volume">${T.volume}</button>
        <button class="lang">ENG</button>
        <button class="time"><span>10:04 PM</span><span>8/13/2020</span></button>
        <button class="notify" aria-label="Notifications">${T.notify}</button>
        <span class="edge"></span>
      </div>`;
  }
}

/* ---------- window ---------- */
@customElement("app-root")
export class AppRoot extends LitElement {
  static styles = [base, css`
    :host { display: flex; flex-direction: column; height: 100vh; background: #f0f0f0; overflow: hidden; }
    .title { display: flex; align-items: center; height: 18px; padding-left: 1px; background: #fff; color: #111; }
    .name { flex: 1; margin: 0 0 0 3px; font: 9px/18px "Open Sans", "Noto Sans", sans-serif; white-space: nowrap; }
    .win { width: 37px; height: 18px; }
    .sub { display: flex; align-items: center; height: 14px; padding-left: 5px; background: #fff; }
    .fill { flex: 1; }
    .mdi { width: 13px; height: 13px; margin-right: 2px; border: 1px solid #eaeaea; }
    .view {
      flex: 1; min-height: 0; display: grid; margin: 1px 3px 1px 2px;
      border: 1px solid #666; border-width: 2px 1px 0 2px; border-color: #666 #ddd #ddd #777;
    }
  `];
  render() {
    return html`
      <header class="title">${I.clio}
        <h1 class="name">CLIO 12 - ELECTRICAL &amp; ACOUSTICAL TESTS - [MLS - Frequency Response]</h1>
        <button class="win" aria-label="Minimize">${I.min}</button>
        <button class="win" aria-label="Restore">${I.restore}</button>
        <button class="win" aria-label="Close">${I.close}</button>
      </header>
      <div class="sub">${I.mls}<span class="fill"></span>
        <button class="mdi" aria-label="Minimize child">${I.min2}</button>
        <button class="mdi" aria-label="Restore child">${I.restore2}</button>
        <button class="mdi" aria-label="Close child">${I.close2}</button>
      </div>
      <clio-toolbars></clio-toolbars>
      <main class="view"><clio-chart></clio-chart></main>
      <clio-status></clio-status>
      <desktop-taskbar></desktop-taskbar>`;
  }
}
